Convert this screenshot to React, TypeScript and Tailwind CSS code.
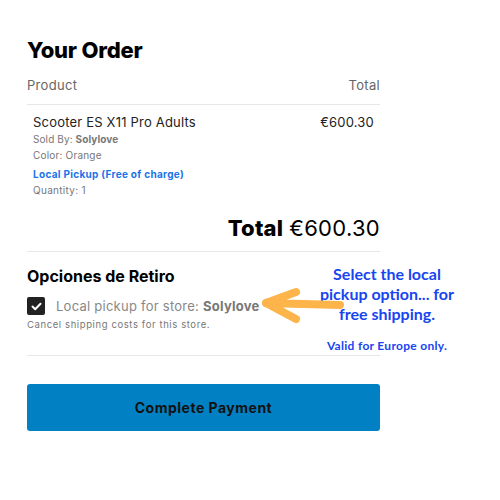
export default function App() {
  return (
    <div className="relative h-[500px] w-[500px] bg-white font-['Inter',sans-serif] text-[#1d1d1d]">
      <div className="w-[353px] pl-[27px] pt-[36px] box-content">
        <h2 className="text-[22px] font-extrabold leading-[28px] text-black tracking-[-0.2px]">Your Order</h2>

        <div className="mt-[12px] flex justify-between border-b border-[#e5e7eb] pb-[10px] text-[13px] leading-[18px] tracking-[0.3px] text-[#666]">
          <span>Product</span>
          <span>Total</span>
        </div>

        <div className="flex justify-between px-[6px] pt-[8px]">
          <div>
            <p className="text-[13px] leading-[18px] tracking-[0.2px] text-[#222]">Scooter ES X11 Pro Adults</p>
            <p className="mt-[1px] text-[10px] leading-[15px] tracking-[0.1px] text-[#777]">
              Sold By: <span className="font-bold">Solylove</span>
            </p>
            <p className="mt-[1px] text-[10px] leading-[15px] tracking-[0.2px] text-[#777]">Color: Orange</p>
            <p className="mt-[4px] text-[10px] font-bold leading-[15px] tracking-[0.3px] text-[#1a73e8]">Local Pickup (Free of charge)</p>
            <p className="mt-[1px] text-[10px] leading-[15px] tracking-[0.3px] text-[#777]">Quantity: 1</p>
          </div>
          <p className="text-[13px] leading-[18px] tracking-[0.2px] text-[#222]">€600.30</p>
        </div>

        <div className="mt-[17px] flex justify-end border-b border-[#e5e7eb] pb-[10px] text-[22px] leading-[26px] text-black">
          <span className="font-extrabold tracking-[0.2px]">Total</span>
          <span className="ml-[6px] tracking-[0.3px]">€600.30</span>
        </div>

        <div className="border-b border-[#e5e7eb] pb-[24px] pt-[13px]">
          <h3 className="text-[16px] font-bold leading-[22px] text-black">Opciones de Retiro</h3>
          <div className="mt-[10px] flex items-center">
            <span className="flex h-[18px] w-[18px] items-center justify-center rounded-[2px] bg-[#222]">
              <svg width="11" height="9" viewBox="0 0 11 9" fill="none">
                <path d="M1.5 4.5L4.2 7.2L9.5 1.8" stroke="white" strokeWidth="2" strokeLinecap="round" strokeLinejoin="round" />
              </svg>
            </span>
            <span className="ml-[11px] text-[13px] leading-[18px] tracking-[0.25px] text-[#888]">
              Local pickup for store: <span className="font-bold text-[#777]">Solylove</span>
            </span>
          </div>
          <p className="mt-[3px] text-[9.5px] leading-[13px] tracking-[0.6px] text-[#777]">Cancel shipping costs for this store.</p>
        </div>

        <button className="mt-[28px] flex h-[47px] w-full items-center justify-center rounded-[3px] bg-[#0180c4] text-[14px] font-bold tracking-[0.5px] text-[#111]">
          Complete Payment
        </button>
      </div>

      <div className="absolute left-[306px] top-[264px] w-[162px] text-center font-['Lato',sans-serif] text-[16px] font-bold leading-[20px] text-[#1745f0]">
        <p>Select the local</p>
        <p>pickup option... for</p>
        <p>free shipping.</p>
        <p className="mt-[15px] text-[12px] leading-[14px] tracking-[0.3px]">Valid for Europe only.</p>
      </div>

      <svg className="absolute left-[258px] top-[284px]" width="90" height="44" viewBox="0 0 90 44">
        <path d="M8 19 L38 8 M8 19 L38 35 M8 19 Q40 20 82 21" stroke="#fdb44b" strokeWidth="8" fill="none" strokeLinecap="round" strokeLinejoin="round" />
      </svg>
    </div>
  );
}
